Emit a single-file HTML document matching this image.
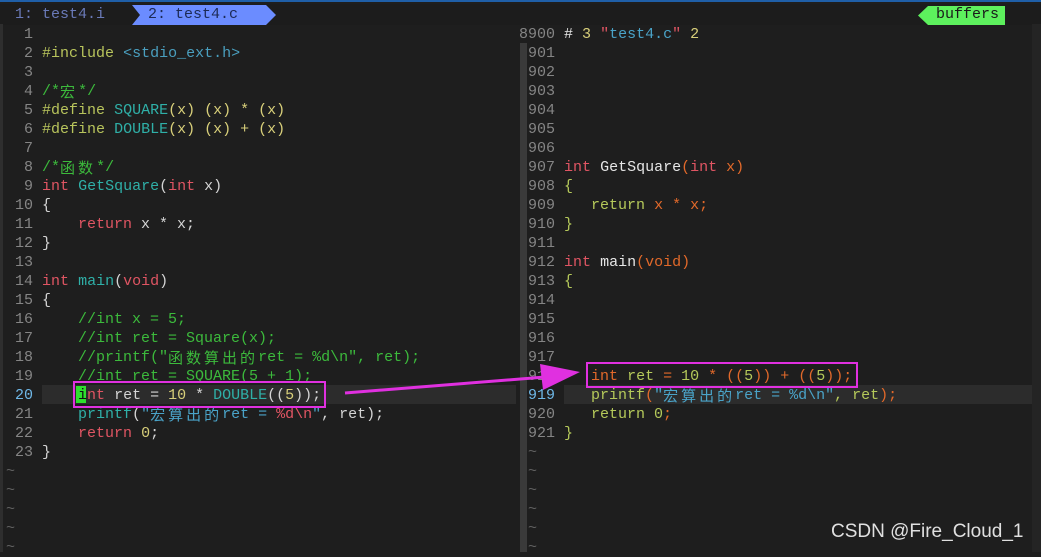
<!DOCTYPE html>
<html><head><meta charset="utf-8"><style>
body{margin:0;width:1041px;height:552px;background:#1e1e1e;overflow:hidden;position:relative;font-family:"Liberation Mono","Noto Sans CJK SC",monospace;font-size:15px;}
.p{position:absolute;top:24px;white-space:pre;line-height:19px;color:#d4d4d4}
.n{color:#858585}
.c{font-family:"Noto Sans CJK SC",sans-serif;letter-spacing:3px;display:inline-block;height:19px;line-height:19px;vertical-align:top;overflow:hidden}
.pp{color:#b8c45c}.inc{color:#4a9fbf}.cm{color:#3cba3c}.tl{color:#2fb0a8}.ye{color:#d8cf7a}.rd{color:#e05563}.or{color:#e2692a}.yg{color:#b5c95a}.st{color:#4aa3c8}.wh{color:#e6e6e6}
.tilde{color:#606060}
</style></head><body>
<div style="position:absolute;left:0;top:0;width:1041px;height:2px;background:#1f5fa8"></div>
<div style="position:absolute;left:0;top:4px;width:1041px;height:21px;background:#1c1c1c"></div>
<div style="position:absolute;left:15px;top:5px;line-height:19px;color:#6a7ab8;white-space:pre">1: test4.i</div>
<svg style="position:absolute;left:132px;top:5px" width="146" height="20"><polygon points="0,0 134,0 144,10 134,20 0,20 8,10" fill="#6b8cff"/></svg>
<div style="position:absolute;left:148px;top:5px;line-height:19px;color:#1c2a55;white-space:pre">2: test4.c</div>
<svg style="position:absolute;left:918px;top:6px" width="90" height="19"><polygon points="10,0 87,0 87,19 10,19 0,9.5" fill="#5df05d"/></svg>
<div style="position:absolute;left:936px;top:5px;line-height:19px;color:#1a1a1a;white-space:pre">buffers</div>
<div style="position:absolute;left:0;top:24px;width:3px;height:528px;background:#2e2e2e"></div>
<div style="position:absolute;left:520px;top:43px;width:7px;height:509px;background:#3a3a3a"></div>
<div style="position:absolute;left:1032px;top:24px;width:9px;height:528px;background:#242424"></div>
<div style="position:absolute;left:42px;top:385px;width:474px;height:19px;background:#2c2c2c"></div>
<div style="position:absolute;left:564px;top:385px;width:468px;height:19px;background:#2c2c2c"></div>
<div style="position:absolute;left:76px;top:386px;width:10px;height:17px;background:#2ee02e"></div>
<div class="p" style="left:6px;top:25px"><span class="n">  1</span>
<span class="n">  2</span> <span class="pp">#include</span> <span class="inc">&lt;stdio_ext.h&gt;</span>
<span class="n">  3</span>
<span class="n">  4</span> <span class="cm">/*<span class="c">宏</span>*/</span>
<span class="n">  5</span> <span class="pp">#define</span> <span class="tl">SQUARE</span><span class="ye">(x) (x) * (x)</span>
<span class="n">  6</span> <span class="pp">#define</span> <span class="tl">DOUBLE</span><span class="ye">(x) (x) + (x)</span>
<span class="n">  7</span>
<span class="n">  8</span> <span class="cm">/*<span class="c">函数</span>*/</span>
<span class="n">  9</span> <span class="rd">int</span> <span class="tl">GetSquare</span>(<span class="rd">int</span> x)
<span class="n"> 10</span> {
<span class="n"> 11</span>     <span class="rd">return</span> x * x;
<span class="n"> 12</span> }
<span class="n"> 13</span>
<span class="n"> 14</span> <span class="rd">int</span> <span class="tl">main</span>(<span class="rd">void</span>)
<span class="n"> 15</span> {
<span class="n"> 16</span>     <span class="cm">//int x = 5;</span>
<span class="n"> 17</span>     <span class="cm">//int ret = Square(x);</span>
<span class="n"> 18</span>     <span class="cm">//printf("<span class="c">函数算出的</span>ret = %d\n", ret);</span>
<span class="n"> 19</span>     <span class="cm">//int ret = SQUARE(5 + 1);</span>
<span style="color:#6fb8e8"> 20</span>     <span style="color:#111">i</span><span class="rd">nt</span> ret = <span class="ye">10</span> * <span class="tl">DOUBLE</span>((<span class="ye">5</span>));
<span class="n"> 21</span>     <span class="tl">printf</span>(<span class="st">"<span class="c">宏算出的</span>ret = </span><span class="rd">%d\n</span><span class="st">"</span>, ret);
<span class="n"> 22</span>     <span class="rd">return</span> <span class="ye">0</span>;
<span class="n"> 23</span> }
<span class="tilde">~</span>
<span class="tilde">~</span>
<span class="tilde">~</span>
<span class="tilde">~</span>
<span class="tilde">~</span></div>
<div class="p" style="left:519px;top:25px"><span class="n">8900</span> <span class="wh"># </span><span class="ye">3</span> <span class="rd">"</span><span class="st">test4.c</span><span class="rd">"</span> <span class="ye">2</span>
<span class="n"> 901</span>
<span class="n"> 902</span>
<span class="n"> 903</span>
<span class="n"> 904</span>
<span class="n"> 905</span>
<span class="n"> 906</span>
<span class="n"> 907</span> <span class="rd">int</span> <span class="wh">GetSquare</span><span class="or">(</span><span class="rd">int</span> <span class="or">x)</span>
<span class="n"> 908</span> <span class="yg">{</span>
<span class="n"> 909</span>    <span class="yg">return</span> <span class="or">x * x;</span>
<span class="n"> 910</span> <span class="yg">}</span>
<span class="n"> 911</span>
<span class="n"> 912</span> <span class="rd">int</span> <span class="wh">main</span><span class="or">(void)</span>
<span class="n"> 913</span> <span class="yg">{</span>
<span class="n"> 914</span>
<span class="n"> 915</span>
<span class="n"> 916</span>
<span class="n"> 917</span>
<span class="n"> 918</span>    <span class="or">int</span> <span class="yg">ret</span> <span class="or">=</span> <span class="yg">10</span> <span class="or">* ((</span><span class="yg">5</span><span class="or">)) + ((</span><span class="yg">5</span><span class="or">));</span>
<span style="color:#6fb8e8"> 919</span>    <span class="yg">printf</span><span class="or">(</span><span class="st">"<span class="c">宏算出的</span>ret = %d\n"</span><span class="yg">, ret</span><span class="or">);</span>
<span class="n"> 920</span>    <span class="yg">return 0</span><span class="or">;</span>
<span class="n"> 921</span> <span class="yg">}</span>
<span class="tilde"> ~</span>
<span class="tilde"> ~</span>
<span class="tilde"> ~</span>
<span class="tilde"> ~</span>
<span class="tilde"> ~</span>
<span class="tilde"> ~</span></div>
<div style="position:absolute;left:73px;top:381px;width:249px;height:23px;border:2.5px solid #e030e0"></div>
<div style="position:absolute;left:586px;top:362px;width:268px;height:22px;border:2.5px solid #e030e0"></div>
<svg style="position:absolute;left:0;top:0" width="1041" height="552"><line x1="345" y1="393" x2="545" y2="377" stroke="#e030e0" stroke-width="3"/><polygon points="540,364 580,372 543,390" fill="#e030e0"/></svg>
<div style="position:absolute;left:831px;top:521px;font-family:'Liberation Sans',sans-serif;font-size:19px;color:#e0e0e0">CSDN @Fire_Cloud_1</div>
</body></html>
